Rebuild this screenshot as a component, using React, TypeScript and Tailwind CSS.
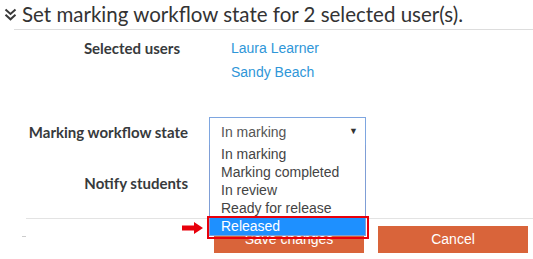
const options = ["In marking", "Marking completed", "In review", "Ready for release", "Released"];

function DoubleChevron() {
  return (
    <svg width="13" height="13" viewBox="0 0 13 13" fill="none" stroke="#3a3a3a" strokeWidth="2">
      <path d="M1.5 1.5 L6.5 6 L11.5 1.5" />
      <path d="M1.5 6.8 L6.5 11.3 L11.5 6.8" />
    </svg>
  );
}

function RedArrow() {
  return (
    <svg width="22" height="12" viewBox="0 0 22 12">
      <path d="M0 3.5 H12 V0 L21 6 L12 12 V8.5 H0 Z" fill="#e8000b" />
    </svg>
  );
}

export default function App() {
  return (
    <div className="relative w-[533px] h-[259px] overflow-hidden bg-white text-[#373a3c]">
      <div className="flex items-center h-[29px] pl-[4px] gap-[5px]">
        <DoubleChevron />
        <h3 className="text-[20.5px] leading-none whitespace-nowrap font-['Lato',sans-serif] text-[#333]">
          Set marking workflow state for 2 selected user(s).
        </h3>
      </div>
      <div className="ml-[14px] border-t border-[#dddddd]" />

      <div className="flex pt-[8px] font-['Liberation_Sans',Arial,sans-serif]">
        <div className="w-[180px] text-right font-bold text-[15px] leading-[20px] font-['Lato',sans-serif]">
          Selected users
        </div>
        <div className="ml-[51px] flex flex-col gap-[4px] text-[14px] leading-[20px] text-[#2f96d8]">
          <span>Laura Learner</span>
          <span>Sandy Beach</span>
        </div>
      </div>

      <div className="flex items-center mt-[35px] h-[30px]">
        <div className="w-[188px] text-right font-bold text-[15px] font-['Lato',sans-serif]">
          Marking workflow state
        </div>
        <div className="ml-[21px] w-[157px] h-[30px] border border-[#7ea6e0] flex items-center justify-between pl-[11px] pr-[7px] font-['Liberation_Sans',Arial,sans-serif] text-[14px] text-[#555]">
          <span>In marking</span>
          <span className="text-[9px] text-[#333]">▼</span>
        </div>
      </div>

      <div className="flex items-center mt-[26px] h-[20px]">
        <div className="w-[188px] text-right font-bold text-[15px] font-['Lato',sans-serif]">
          Notify students
        </div>
      </div>

      <div className="ml-[26px] mt-[25px] border-t border-[#e3e3e3]" />
      <div className="flex items-start mt-[7px] font-['Liberation_Sans',Arial,sans-serif]">
        <div className="ml-[22px] mt-[10px] w-[4px] border-t border-[#cccccc]" />
        <button className="ml-[188px] w-[150px] h-[27px] bg-[#d9643a] text-white text-[14px]">Save changes</button>
        <button className="ml-[14px] w-[150px] h-[27px] bg-[#d9643a] text-white text-[14px]">Cancel</button>
      </div>

      <div className="absolute left-[209px] top-[145px] w-[157px] border border-[#7f9ed6] border-t-0 bg-white font-['Liberation_Sans',Arial,sans-serif] text-[14px] text-[#444]">
        {options.map((o) => (
          <div
            key={o}
            className={
              o === "Released"
                ? "h-[18px] leading-[18px] pl-[11px] bg-[#1e90ff] text-white"
                : "h-[18px] leading-[18px] pl-[11px]"
            }
          >
            {o}
          </div>
        ))}
      </div>

      <div className="absolute left-[207px] top-[216px] w-[162px] h-[23px] border-2 border-[#e8000b]" />
      <div className="absolute left-[182px] top-[222px]">
        <RedArrow />
      </div>
    </div>
  );
}
